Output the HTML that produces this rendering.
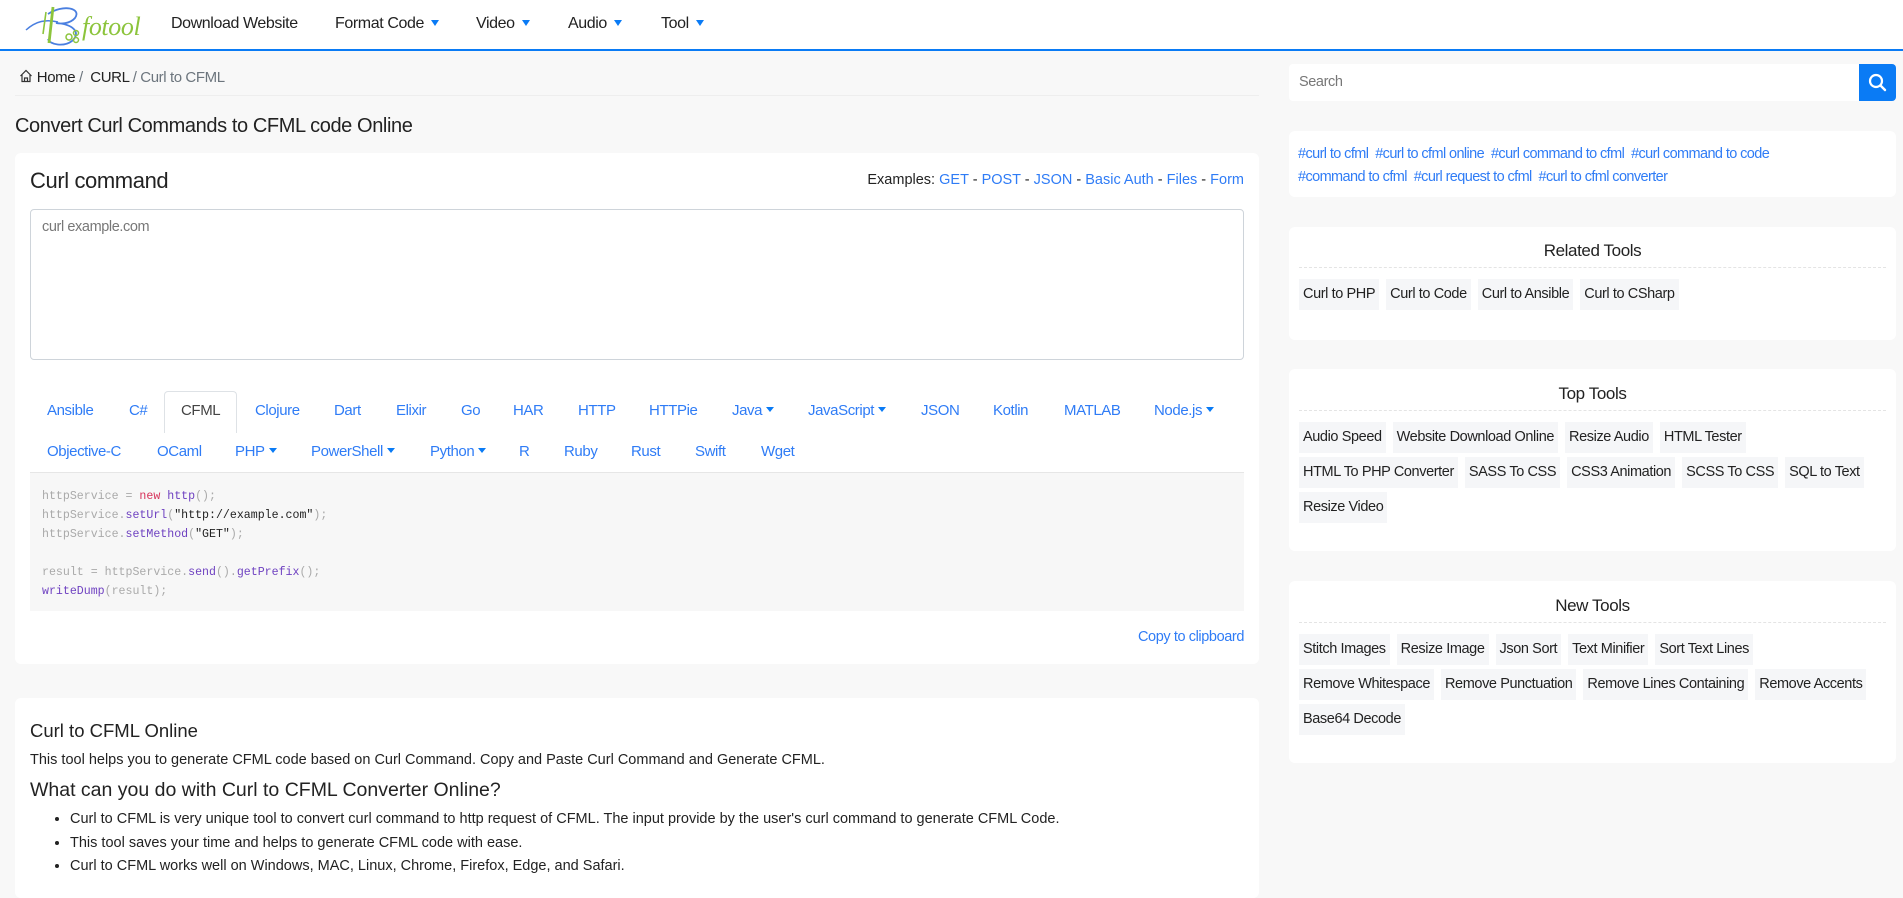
<!DOCTYPE html>
<html><head><meta charset="utf-8"><style>
*{box-sizing:border-box;margin:0;padding:0}
body{width:1903px;height:872px;overflow:hidden;background:#f8f8f8;font-family:"Liberation Sans",Arial,sans-serif;color:#212529;position:relative;letter-spacing:-0.4px}
.a{position:absolute;white-space:nowrap}
.nav{position:absolute;left:0;top:0;width:1903px;height:51px;background:#fff;border-bottom:2px solid #0a7bf5}
.ni{position:absolute;top:15px;font-size:16px;color:#222}
.car{display:inline-block;width:0;height:0;border-left:4px solid transparent;border-right:4px solid transparent;border-top:6px solid #0a7bf5;margin-left:7px;vertical-align:2px}
.card{position:absolute;background:#fff;border-radius:6px}
.blue{color:#2f7cf6}
.tab{position:absolute;font-size:15px;color:#2f7cf6}
.tab .car{border-top-width:5px;margin-left:4px;vertical-align:3px}
.code{font-family:"Liberation Mono",monospace;font-size:11.6px;color:#aaa;letter-spacing:0}
.k{color:#d7335b}.f{color:#6f42c1}.s{color:#222}
.btn{display:inline-block;background:#f5f6f8;font-size:14.5px;color:#222;height:31px;line-height:31px;padding:0 4px;margin:0 7px 4px 0}
.st{position:absolute;left:0;width:100%;text-align:center;font-size:17px;color:#222}
.dash{position:absolute;left:10px;right:10px;border-top:1px dashed #e4e4e4}
.bwrap{position:absolute;left:10px;right:6px}
.ns{letter-spacing:0}
</style></head><body>
<div class="nav">
 <svg class="a" style="left:18px;top:2px" width="130" height="46" viewBox="0 0 130 46">
  <path d="M30 12 C45 2 64 6 57 16 C52 22 42 22 38 21 C54 22 64 30 54 39 C46 45 32 43 30 37" fill="none" stroke="#4a7fe0" stroke-width="1.8"/>
  <path d="M8 28 C18 19 28 17 40 20" fill="none" stroke="#4a7fe0" stroke-width="1.5"/>
  <path d="M35 5 L31 41" stroke="#8cc43c" stroke-width="2.8"/>
  <path d="M28 10 L25 32" stroke="#8cc43c" stroke-width="1.6"/>
  <circle cx="51" cy="35" r="3" fill="none" stroke="#8cc43c" stroke-width="1.5"/>
  <circle cx="58" cy="31" r="2.5" fill="none" stroke="#8cc43c" stroke-width="1.5"/>
  <circle cx="58" cy="38" r="2.5" fill="none" stroke="#8cc43c" stroke-width="1.5"/>
  <text x="64" y="33" font-family="Liberation Serif" font-style="italic" font-size="26" fill="#8cc43c">fotool</text>
 </svg>
 <div class="ni" style="left:171px">Download Website</div>
 <div class="ni" style="left:335px">Format Code<span class="car"></span></div>
 <div class="ni" style="left:476px">Video<span class="car"></span></div>
 <div class="ni" style="left:568px">Audio<span class="car"></span></div>
 <div class="ni" style="left:661px">Tool<span class="car"></span></div>
</div>

<div class="a" style="left:19px;top:69px;font-size:15px;color:#222"><svg width="14" height="14" viewBox="0 0 14 14" style="vertical-align:-1px"><path d="M1.5 7 L7 1.5 L12.5 7 M3 6 V12.5 H11 V6 M5.5 12.5 V9 H8.5 V12.5" fill="none" stroke="#333" stroke-width="1.2"/></svg> Home <span style="color:#6c757d">/</span>&nbsp; CURL <span style="color:#6c757d">/ Curl to CFML</span></div>
<div class="a" style="left:15px;top:95px;width:1244px;border-top:1px solid #eee"></div>
<div class="a" style="left:15px;top:115px;font-size:20px;color:#222">Convert Curl Commands to CFML code Online</div>

<div class="card" style="left:15px;top:153px;width:1244px;height:511px">
 <div class="a" style="left:15px;top:15px;font-size:22px;color:#222">Curl command</div>
 <div class="a ns" style="right:15px;top:19px;font-size:14.5px;color:#222">Examples: <span class="blue">GET</span> - <span class="blue">POST</span> - <span class="blue">JSON</span> - <span class="blue">Basic Auth</span> - <span class="blue">Files</span> - <span class="blue">Form</span></div>
 <div class="a" style="left:15px;top:56px;width:1214px;height:151px;border:1px solid #ced4da;border-radius:4px;background:#fff"><div class="a" style="left:11px;top:9px;font-size:14.5px;color:#777">curl example.com</div></div>
 <div class="a" style="left:149px;top:238px;width:73px;height:42px;border:1px solid #dee2e6;border-bottom:none;border-radius:4px 4px 0 0;background:#fff"></div>
 <div class="a" style="left:15px;top:319px;width:1214px;height:139px;background:#f7f7f7;border-top:1px solid #e6e6e6"></div>
 <div class="tab" style="left:32px;top:249px">Ansible</div>
 <div class="tab" style="left:114px;top:249px">C#</div>
 <div class="tab" style="left:166px;top:249px;color:#444">CFML</div>
 <div class="tab" style="left:240px;top:249px">Clojure</div>
 <div class="tab" style="left:319px;top:249px">Dart</div>
 <div class="tab" style="left:381px;top:249px">Elixir</div>
 <div class="tab" style="left:446px;top:249px">Go</div>
 <div class="tab" style="left:498px;top:249px">HAR</div>
 <div class="tab" style="left:563px;top:249px">HTTP</div>
 <div class="tab" style="left:634px;top:249px">HTTPie</div>
 <div class="tab" style="left:717px;top:249px">Java<span class="car"></span></div>
 <div class="tab" style="left:793px;top:249px">JavaScript<span class="car"></span></div>
 <div class="tab" style="left:906px;top:249px">JSON</div>
 <div class="tab" style="left:978px;top:249px">Kotlin</div>
 <div class="tab" style="left:1049px;top:249px">MATLAB</div>
 <div class="tab" style="left:1139px;top:249px">Node.js<span class="car"></span></div>
 <div class="tab" style="left:32px;top:290px">Objective-C</div>
 <div class="tab" style="left:142px;top:290px">OCaml</div>
 <div class="tab" style="left:220px;top:290px">PHP<span class="car"></span></div>
 <div class="tab" style="left:296px;top:290px">PowerShell<span class="car"></span></div>
 <div class="tab" style="left:415px;top:290px">Python<span class="car"></span></div>
 <div class="tab" style="left:504px;top:290px">R</div>
 <div class="tab" style="left:549px;top:290px">Ruby</div>
 <div class="tab" style="left:616px;top:290px">Rust</div>
 <div class="tab" style="left:680px;top:290px">Swift</div>
 <div class="tab" style="left:746px;top:290px">Wget</div>
 <div class="a code" style="left:27px;top:334px;line-height:19px">httpService = <span class="k">new</span> <span class="f">http</span>();<br>httpService.<span class="f">setUrl</span>(<span class="s">"http://example.com"</span>);<br>httpService.<span class="f">setMethod</span>(<span class="s">"GET"</span>);<br><br>result = httpService.<span class="f">send</span>().<span class="f">getPrefix</span>();<br><span class="f">writeDump</span>(result);</div>
 <div class="a blue" style="right:15px;top:476px;font-size:14.5px">Copy to clipboard</div>
</div>

<div class="card ns" style="left:15px;top:698px;width:1244px;height:200px">
 <div class="a" style="left:15px;top:22px;font-size:18.5px;color:#222">Curl to CFML Online</div>
 <div class="a" style="left:15px;top:54px;font-size:14.5px;color:#222">This tool helps you to generate CFML code based on Curl Command. Copy and Paste Curl Command and Generate CFML.</div>
 <div class="a" style="left:15px;top:81px;font-size:19.5px;color:#222">What can you do with Curl to CFML Converter Online?</div>
 <ul class="a" style="left:55px;top:110px;font-size:14.5px;color:#222;line-height:23.5px">
  <li>Curl to CFML is very unique tool to convert curl command to http request of CFML. The input provide by the user's curl command to generate CFML Code.</li>
  <li>This tool saves your time and helps to generate CFML code with ease.</li>
  <li>Curl to CFML works well on Windows, MAC, Linux, Chrome, Firefox, Edge, and Safari.</li>
 </ul>
</div>

<div class="a" style="left:1289px;top:64px;width:570px;height:37px;background:#fff;border-radius:4px 0 0 4px"><div class="a" style="left:10px;top:10px;font-size:14.5px;color:#777">Search</div></div>
<div class="a" style="left:1859px;top:64px;width:37px;height:37px;background:#0a7bf5;border-radius:0 4px 4px 0"><svg class="a" style="left:9px;top:9px" width="19" height="19" viewBox="0 0 19 19"><circle cx="8" cy="8" r="6" fill="none" stroke="#fff" stroke-width="2.2"/><path d="M12.5 12.5 L17 17" stroke="#fff" stroke-width="2.4" stroke-linecap="round"/></svg></div>

<div class="card" style="left:1289px;top:131px;width:607px;height:66px">
 <div class="a blue" style="left:9px;top:12px;font-size:14.5px;line-height:23px;letter-spacing:-0.6px">#curl to cfml&nbsp; #curl to cfml online&nbsp; #curl command to cfml&nbsp; #curl command to code<br>#command to cfml&nbsp; #curl request to cfml&nbsp; #curl to cfml converter</div>
</div>

<div class="card" style="left:1289px;top:227px;width:607px;height:113px">
 <div class="st" style="top:14px">Related Tools</div>
 <div class="dash" style="top:40px"></div>
 <div class="bwrap" style="top:52px"><span class="btn">Curl to PHP</span><span class="btn">Curl to Code</span><span class="btn">Curl to Ansible</span><span class="btn">Curl to CSharp</span></div>
</div>

<div class="card" style="left:1289px;top:369px;width:607px;height:182px">
 <div class="st" style="top:15px">Top Tools</div>
 <div class="dash" style="top:41px"></div>
 <div class="bwrap" style="top:53px"><span class="btn">Audio Speed</span><span class="btn">Website Download Online</span><span class="btn">Resize Audio</span><span class="btn">HTML Tester</span><span class="btn">HTML To PHP Converter</span><span class="btn">SASS To CSS</span><span class="btn">CSS3 Animation</span><span class="btn">SCSS To CSS</span><span class="btn">SQL to Text</span><span class="btn">Resize Video</span></div>
</div>

<div class="card" style="left:1289px;top:581px;width:607px;height:182px">
 <div class="st" style="top:15px">New Tools</div>
 <div class="dash" style="top:41px"></div>
 <div class="bwrap" style="top:53px"><span class="btn">Stitch Images</span><span class="btn">Resize Image</span><span class="btn">Json Sort</span><span class="btn">Text Minifier</span><span class="btn">Sort Text Lines</span><span class="btn">Remove Whitespace</span><span class="btn">Remove Punctuation</span><span class="btn">Remove Lines Containing</span><span class="btn">Remove Accents</span><span class="btn">Base64 Decode</span></div>
</div>
</body></html>
